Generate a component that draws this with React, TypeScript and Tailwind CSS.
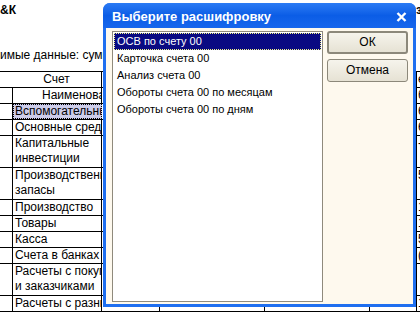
import React from 'react';

const rows: { lines: string[]; tall?: boolean; selected?: boolean; tail: string }[] = [
    { lines: ['Вспомогательный'], selected: true, tail: '6' },
    { lines: ['Основные средства'], tail: '6' },
    { lines: ['Капитальные', 'инвестиции'], tall: true, tail: '-' },
    { lines: ['Производственные', 'запасы'], tall: true, tail: '5' },
    { lines: ['Производство'], tail: '1' },
    { lines: ['Товары'], tail: '1' },
    { lines: ['Касса'], tail: '5' },
    { lines: ['Счета в банках'], tail: '(' },
    { lines: ['Расчеты с покупателями', 'и заказчиками'], tall: true, tail: '' },
    { lines: ['Расчеты с разными'], tail: '1' },
];

const items = ['ОСВ по счету 00', 'Карточка счета 00', 'Анализ счета 00', 'Обороты счета 00 по месяцам', 'Обороты счета 00 по дням'];

const TailCells = ({ tail }: { tail?: string }) => (
    <>
        <div className="w-[58px] shrink-0 border-r border-black" />
        <div className="w-[105px] shrink-0 border-r border-black" />
        <div className="w-[105px] shrink-0 border-r border-black" />
        <div className="w-[47px] shrink-0 border-r border-black" />
        <div className="flex-1 overflow-hidden pl-[1px] whitespace-nowrap">{tail}</div>
    </>
);

export default function App() {
    return (
        <div className="relative w-[420px] h-[312px] overflow-hidden bg-white text-black font-['Liberation_Sans',Arial,sans-serif] text-[12px] leading-[15px]">
            {/* Report behind the dialog */}
            <div className="flex h-[20px] pt-[3px] justify-between">
                <span className="font-bold">&amp;К</span>
                <span className="w-[4px] overflow-hidden font-bold">з</span>
            </div>
            <div className="mt-[28px] h-[23px] w-[103px] overflow-hidden whitespace-nowrap">имые данные: суммы</div>

            <div className="border-t border-black">
                <div className="flex h-[16px] border-b border-black">
                    <div className="w-[102px] shrink-0 border-r border-black pl-[12px] text-center">Счет</div>
                    <TailCells tail="е" />
                </div>
                <div className="flex h-[16px] border-b border-black">
                    <div className="w-[13px] shrink-0 border-r border-black" />
                    <div className="w-[89px] shrink-0 border-r border-black pl-[29px] overflow-hidden whitespace-nowrap">Наименование</div>
                    <TailCells tail="б" />
                </div>
                {rows.map((r, i) => (
                    <div key={i} className={`flex border-b border-black ${r.tall ? 'h-[32px]' : 'h-[16px]'}`}>
                        <div className="w-[13px] shrink-0 border-r border-black" />
                        <div
                            className={`w-[89px] shrink-0 border-r border-black overflow-hidden whitespace-nowrap ${
                                r.selected ? 'bg-[#cdcdea] border border-dotted border-l-black' : 'pl-[2px]'
                            }`}
                        >
                            {r.lines.map((l) => (
                                <div key={l} className={r.selected ? 'pl-[1px] leading-[13px]' : ''}>
                                    {l}
                                </div>
                            ))}
                        </div>
                        <TailCells tail={r.tail} />
                    </div>
                ))}
            </div>

            {/* Dialog */}
            <div className="absolute left-[103px] top-[3px] w-[313px] h-[304px] rounded-t-[7px] bg-[#1f6ff0] flex flex-col px-[3px] pb-[3px]">
                <div className="h-[25px] -mx-[3px] rounded-t-[7px] bg-gradient-to-b from-[#2b7bf4] via-[#0b5de6] to-[#1766ec] flex items-center pl-[9px] pr-[9px]">
                    <span className="flex-1 pt-[2px] text-white font-bold text-[13px] font-['Liberation_Sans',Arial,sans-serif]">Выберите расшифровку</span>
                    <svg width="11" height="10" viewBox="0 0 11 10" className="mt-[2px]">
                        <path d="M1.5 1 L9.5 9 M9.5 1 L1.5 9" stroke="white" strokeWidth="2.4" />
                    </svg>
                </div>
                <div className="flex-1 bg-[#fef9ee] flex pl-[6px] pt-[3px] pb-[2px] text-[11px] leading-[13px]">
                    <div className="w-[211px] border border-[#8f8a7c] bg-white p-[1px] flex flex-col">
                        {items.map((it, i) => (
                            <div
                                key={it}
                                className={`h-[17px] pl-[2px] flex items-center whitespace-nowrap ${
                                    i === 0 ? 'bg-[#0a0a82] text-white border border-dotted border-[#f4f48a]' : 'border border-transparent'
                                }`}
                            >
                                {it}
                            </div>
                        ))}
                    </div>
                    <div className="ml-[4px] w-[81px] flex flex-col gap-[5px] text-[12px]">
                        <button className="h-[23px] rounded-[3px] border-2 border-[#8c887a] bg-gradient-to-b from-[#f6f4ec] to-[#e6e2d4] flex items-center justify-center">
                            ОК
                        </button>
                        <button className="h-[23px] rounded-[3px] border border-[#8c887a] bg-gradient-to-b from-[#f6f4ec] to-[#e6e2d4] flex items-center justify-center">
                            Отмена
                        </button>
                    </div>
                </div>
            </div>
        </div>
    );
}
